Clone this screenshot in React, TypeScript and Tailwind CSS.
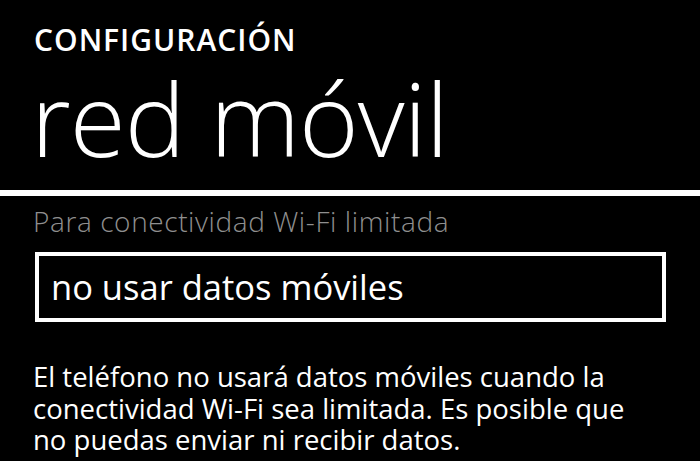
export default function App() {
  return (
    <div className="w-[700px] h-[461px] overflow-hidden bg-black text-white font-['Open_Sans',sans-serif]">
      <header className="pl-[34px] pt-[25px]">
        <p className="text-[30px] font-semibold leading-[30px] tracking-[1px]">CONFIGURACIÓN</p>
        <h1 className="mt-[8px] -ml-[3px] text-[102px] font-light leading-[110px] tracking-[-1px]">red móvil</h1>
      </header>

      <div className="h-[6px] bg-white mt-[17px]" />

      <section className="px-[33px] pt-[10px]">
        <p className="text-[28px] font-light leading-[30px] tracking-[0.6px] text-[#8f8f8f]">Para conectividad Wi-Fi limitada</p>

        <div className="mt-[16px] ml-[2px] w-[631px] h-[70px] border-4 border-white flex items-center px-[12px]">
          <span className="text-[34.5px] leading-none">no usar datos móviles</span>
        </div>

        <p className="mt-[39px] text-[27.5px] leading-[31.5px]">
          El teléfono no usará datos móviles cuando la
          <br />
          conectividad Wi-Fi sea limitada. Es posible que
          <br />
          no puedas enviar ni recibir datos.
        </p>
      </section>
    </div>
  );
}
